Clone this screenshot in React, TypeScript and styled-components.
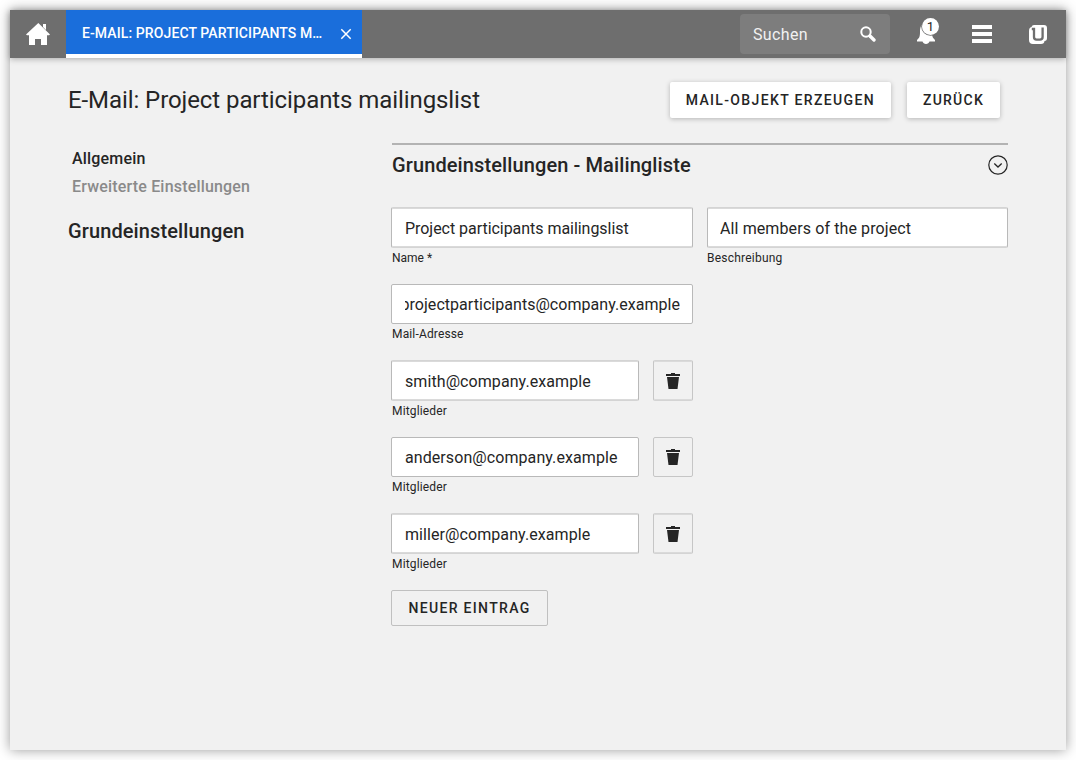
import React from 'react';
import styled, { createGlobalStyle, css } from 'styled-components';

const GlobalStyle = createGlobalStyle`
  * { box-sizing: border-box; }
  body {
    margin: 0;
    background: #fff;
    color: #252525;
    font-family: Roboto, "Liberation Sans", sans-serif;
    font-size: 16px;
  }
  button { font-family: inherit; color: inherit; margin: 0; cursor: pointer; }
`;

const Page = styled.div`
  height: 760px;
  padding: 10px;
  overflow: hidden;
`;

const Window = styled.div`
  height: 740px;
  background: #f1f1f1;
  box-shadow: 0 0 12px rgba(0, 0, 0, 0.4);
`;

const Header = styled.header`
  display: flex;
  height: 48px;
  background: #6e6e6e;
  color: #fff;
  box-shadow: 0 1px 6px rgba(0, 0, 0, 0.3);
`;

const HeaderButton = styled.button`
  position: relative;
  display: flex;
  align-items: center;
  justify-content: center;
  width: 56px;
  height: 48px;
  padding: 0;
  border: 0;
  background: transparent;
  color: #fff;
  svg { display: block; }
`;

const Tab = styled.div`
  display: flex;
  align-items: center;
  width: 296px;
  height: 48px;
  padding: 0 10px 0 16px;
  background: #1a6edb;
  border-bottom: 4px solid #fff;
`;

const TabTitle = styled.span`
  width: 242px;
  margin-right: 16px;
  font-size: 14px;
  font-weight: 500;
  line-height: 20px;
  letter-spacing: 0.1px;
  padding-top: 2px;
  white-space: nowrap;
`;

const CloseIcon = styled.svg`
  flex: none;
  margin-top: 4px;
`;

const Tools = styled.div`
  display: flex;
  align-items: center;
  margin-left: auto;
`;

const Search = styled.div`
  display: flex;
  align-items: center;
  justify-content: space-between;
  width: 150px;
  height: 40px;
  margin-right: 8px;
  padding: 0 14px 0 13px;
  border-radius: 4px;
  background: #7d7d7d;
  color: #f1f1f1;
  letter-spacing: 0.35px;
`;

const Badge = styled.span`
  position: absolute;
  left: 24px;
  top: 8px;
  width: 17px;
  height: 17px;
  border-radius: 50%;
  background: #fff;
  color: #252525;
  font-size: 13px;
  line-height: 18px;
  text-align: center;
`;

const TitleBar = styled.div`
  display: flex;
  align-items: center;
  height: 36px;
  margin: 24px 66px 0 58px;
`;

const Title = styled.h1`
  flex: 1;
  margin: 0;
  font-size: 24px;
  font-weight: 400;
  line-height: 36px;
  letter-spacing: -0.08px;
`;

const Button = styled.button<{ $outlined?: boolean; $spacing?: number }>`
  height: 36px;
  padding: 0 16px;
  border: 0;
  border-radius: 2px;
  background: #fff;
  font-size: 14px;
  font-weight: 500;
  letter-spacing: ${({ $spacing = 1.25 }) => $spacing}px;
  line-height: 36px;
  white-space: nowrap;
  box-shadow: 0 1px 5px rgba(0, 0, 0, 0.25);
  & + & { margin-left: 16px; }
  ${({ $outlined }) => $outlined && css`
    width: 157px;
    border: 1px solid #c0c0c0;
    line-height: 34px;
    background: transparent;
    box-shadow: none;
  `}
`;

const Body = styled.div`
  display: flex;
  margin: 25px 58px 0;
`;

const Sidebar = styled.nav`
  width: 324px;
  padding-top: 2px;
`;

const NavItem = styled.div<{ $active?: boolean }>`
  padding-left: 4px;
  font-weight: 500;
  line-height: 28px;
  letter-spacing: 0.18px;
  color: ${({ $active }) => ($active ? '#252525' : '#8a8a8a')};
`;

const SectionTitle = styled.h2`
  margin: 0;
  font-size: 20px;
  font-weight: 500;
  line-height: 30px;
  letter-spacing: 0.11px;
`;

const NavTitle = styled(SectionTitle)`
  margin-top: 15px;
`;

const Section = styled.section`
  width: 616px;
  border-top: 2px solid #b3b3b3;
`;

const SectionHeader = styled.div`
  display: flex;
  align-items: center;
  justify-content: space-between;
  height: 40px;
`;

const Form = styled.div`
  display: flex;
  flex-direction: column;
  gap: 16.5px;
  margin: 22.5px -1px 0 -1px;
`;

const Row = styled.div`
  display: flex;
  gap: 14px;
`;

/* A half-pixel wide edge spread over two lighter lines. */
const softEdge = css`
  height: 41px;
  margin-top: -1px;
  border-top-color: #d4d4d4;
  border-bottom-color: #d4d4d4;
  box-shadow: inset 0 1px 0 #dadada, inset 0 -1px 0 #dadada;
`;

const Field = styled.div<{ $width: number }>`
  width: ${({ $width }) => $width}px;
  height: 60px;
`;

const Input = styled.div<{ $soft?: boolean; $inset: number }>`
  height: 40px;
  padding: 0 12px 0 ${({ $inset }) => 12 + $inset}px;
  border: 1px solid #b9b9b9;
  border-radius: 2px;
  background: #fff;
  line-height: 40px;
  ${({ $soft }) => $soft && css`
    ${softEdge}
    padding-top: 1px;
  `}
`;

const Value = styled.div<{ $scrolled?: boolean; $spacing: number }>`
  display: flex;
  justify-content: ${({ $scrolled }) => ($scrolled ? 'flex-end' : 'flex-start')};
  height: 38px;
  overflow: hidden;
  white-space: nowrap;
  letter-spacing: ${({ $spacing }) => $spacing}px;
`;

const Label = styled.div<{ $spacing: number; $inset: number }>`
  padding-left: ${({ $inset }) => $inset}px;
  font-size: 12px;
  line-height: 20px;
  letter-spacing: ${({ $spacing }) => $spacing}px;
`;

const DeleteButton = styled.button<{ $soft?: boolean }>`
  display: flex;
  align-items: center;
  justify-content: center;
  width: 40px;
  height: 40px;
  padding: 0;
  border: 1px solid #c6c6c6;
  border-radius: 2px;
  background: transparent;
  ${({ $soft }) => $soft && css`
    ${softEdge}
    padding-top: 1px;
  `}
`;

const HomeIcon = () => (
  <svg width="24" height="24" viewBox="0 0 24 24" fill="#fff">
    <path d="M12.300 1 24 12.500l-1 .8h-2V23h-6v-6H9v6H3v-9.700H1l-1-.8zM17 2h3v6l-3-3z" />
  </svg>
);

const SearchIcon = () => (
  <svg width="16" height="16" viewBox="0 0 16 16" fill="none" stroke="#fff">
    <circle cx="6" cy="6" r="4.700" strokeWidth="2" />
    <path d="m10 10 4 4" strokeWidth="3.300" strokeLinecap="round" />
  </svg>
);

const BellIcon = () => (
  <svg width="20" height="24" viewBox="0 0 20 24" fill="#fff">
    <path d="M10 0c1 0 1.500.8 1.700 1.500C15 2.500 16 6 16 10c0 5 1 6 3 8v1.500h-5.500c-.5 1.500-1.800 2.500-3.500 2.500s-3-1-3.500-2.500H1V18c2-2 3-3 3-8s1-7.500 4.300-8.500C8.500.8 9 0 10 0z" />
    <circle cx="14.500" cy="4.500" r="9.300" fill="#6e6e6e" />
  </svg>
);

const MenuIcon = () => (
  <svg width="20" height="18" viewBox="0 0 20 18" fill="#fff">
    <path d="M0 0h20v4H0zM0 7h20v4H0zM0 14h20v4H0z" />
  </svg>
);

const LogoIcon = () => (
  <svg width="18" height="19" viewBox="0 0 18 19">
    <path fill="#fff" d="M5 0h10q3 0 3 3v10q0 3-2.500 3-.2 3-3.500 3H4q-4 0-4-4V6q0-3.500 2.500-4Q3 0 5 0z" />
    <path fill="none" stroke="#6e6e6e" strokeWidth="2.300" d="M2.800 4H5v8Q5 14.600 7.500 14.600H11q2.600 0 2.600-2.600V2.500" />
  </svg>
);

const ChevronIcon = () => (
  <svg width="20" height="20" viewBox="0 0 20 20" fill="none" stroke="#252525">
    <circle cx="10" cy="10" r="9.200" strokeWidth="1.200" />
    <path d="m6.300 8.500 3.700 3.500 3.700-3.500" strokeWidth="1.300" />
  </svg>
);

const TrashIcon = () => (
  <svg width="14" height="16" viewBox="0 0 14 16" fill="#252525">
    <path d="M5 0h4v1h5v2H0V1h5zM1 4h12l-1.500 12h-9z" />
  </svg>
);

const members = [
  { mail: 'smith@company.example', soft: true },
  { mail: 'anderson@company.example', soft: false },
  { mail: 'miller@company.example', soft: true },
];

type TextFieldProps = {
  label: string;
  value: string;
  width: number;
  scrolled?: boolean;
  soft?: boolean;
  inset?: number;
  spacing?: number;
  labelSpacing?: number;
};

const TextField = ({
  label,
  value,
  width,
  scrolled,
  soft,
  inset = 1,
  spacing = 0.08,
  labelSpacing = 0.15,
}: TextFieldProps) => (
  <Field $width={width}>
    <Input $soft={soft} $inset={inset}>
      <Value $scrolled={scrolled} $spacing={spacing}><span>{value}</span></Value>
    </Input>
    <Label $spacing={labelSpacing} $inset={inset}>{label}</Label>
  </Field>
);

export default function App() {
  return (
    <Page>
      <GlobalStyle />
      <Window>
        <Header>
          <HeaderButton aria-label="Home"><HomeIcon /></HeaderButton>
          <Tab>
            <TabTitle>E-MAIL: PROJECT PARTICIPANTS M…</TabTitle>
            <CloseIcon width="12" height="12" viewBox="0 0 12 12" stroke="#fff" strokeWidth="1.500">
              <path d="m1.300 1.300 9.400 9.400M10.700 1.300l-9.400 9.400" />
            </CloseIcon>
          </Tab>
          <Tools>
            <Search><span>Suchen</span><SearchIcon /></Search>
            <HeaderButton aria-label="Benachrichtigungen"><BellIcon /><Badge>1</Badge></HeaderButton>
            <HeaderButton aria-label="Menü"><MenuIcon /></HeaderButton>
            <HeaderButton aria-label="Univention"><LogoIcon /></HeaderButton>
          </Tools>
        </Header>
        <TitleBar>
          <Title>E-Mail: Project participants mailingslist</Title>
          <Button $spacing={1.35}>MAIL-OBJEKT ERZEUGEN</Button>
          <Button>ZURÜCK</Button>
        </TitleBar>
        <Body>
          <Sidebar>
            <NavItem $active>Allgemein</NavItem>
            <NavItem>Erweiterte Einstellungen</NavItem>
            <NavTitle>Grundeinstellungen</NavTitle>
          </Sidebar>
          <Section>
            <SectionHeader>
              <SectionTitle>Grundeinstellungen - Mailingliste</SectionTitle>
              <ChevronIcon />
            </SectionHeader>
            <Form>
              <Row>
                <TextField label="Name *" value="Project participants mailingslist" width={302} soft spacing={-0.04} labelSpacing={0} />
                <TextField label="Beschreibung" value="All members of the project" width={301} soft inset={0} spacing={0.11} labelSpacing={0.22} />
              </Row>
              <Row>
                <TextField label="Mail-Adresse" value="projectparticipants@company.example" width={302} scrolled spacing={0.04} />
              </Row>
              {members.map(({ mail, soft }) => (
                <Row key={mail}>
                  <TextField label="Mitglieder" value={mail} width={248} soft={soft} />
                  <DeleteButton $soft={soft} aria-label="Entfernen"><TrashIcon /></DeleteButton>
                </Row>
              ))}
              <Row><Button $outlined $spacing={1.33}>NEUER EINTRAG</Button></Row>
            </Form>
          </Section>
        </Body>
      </Window>
    </Page>
  );
}
